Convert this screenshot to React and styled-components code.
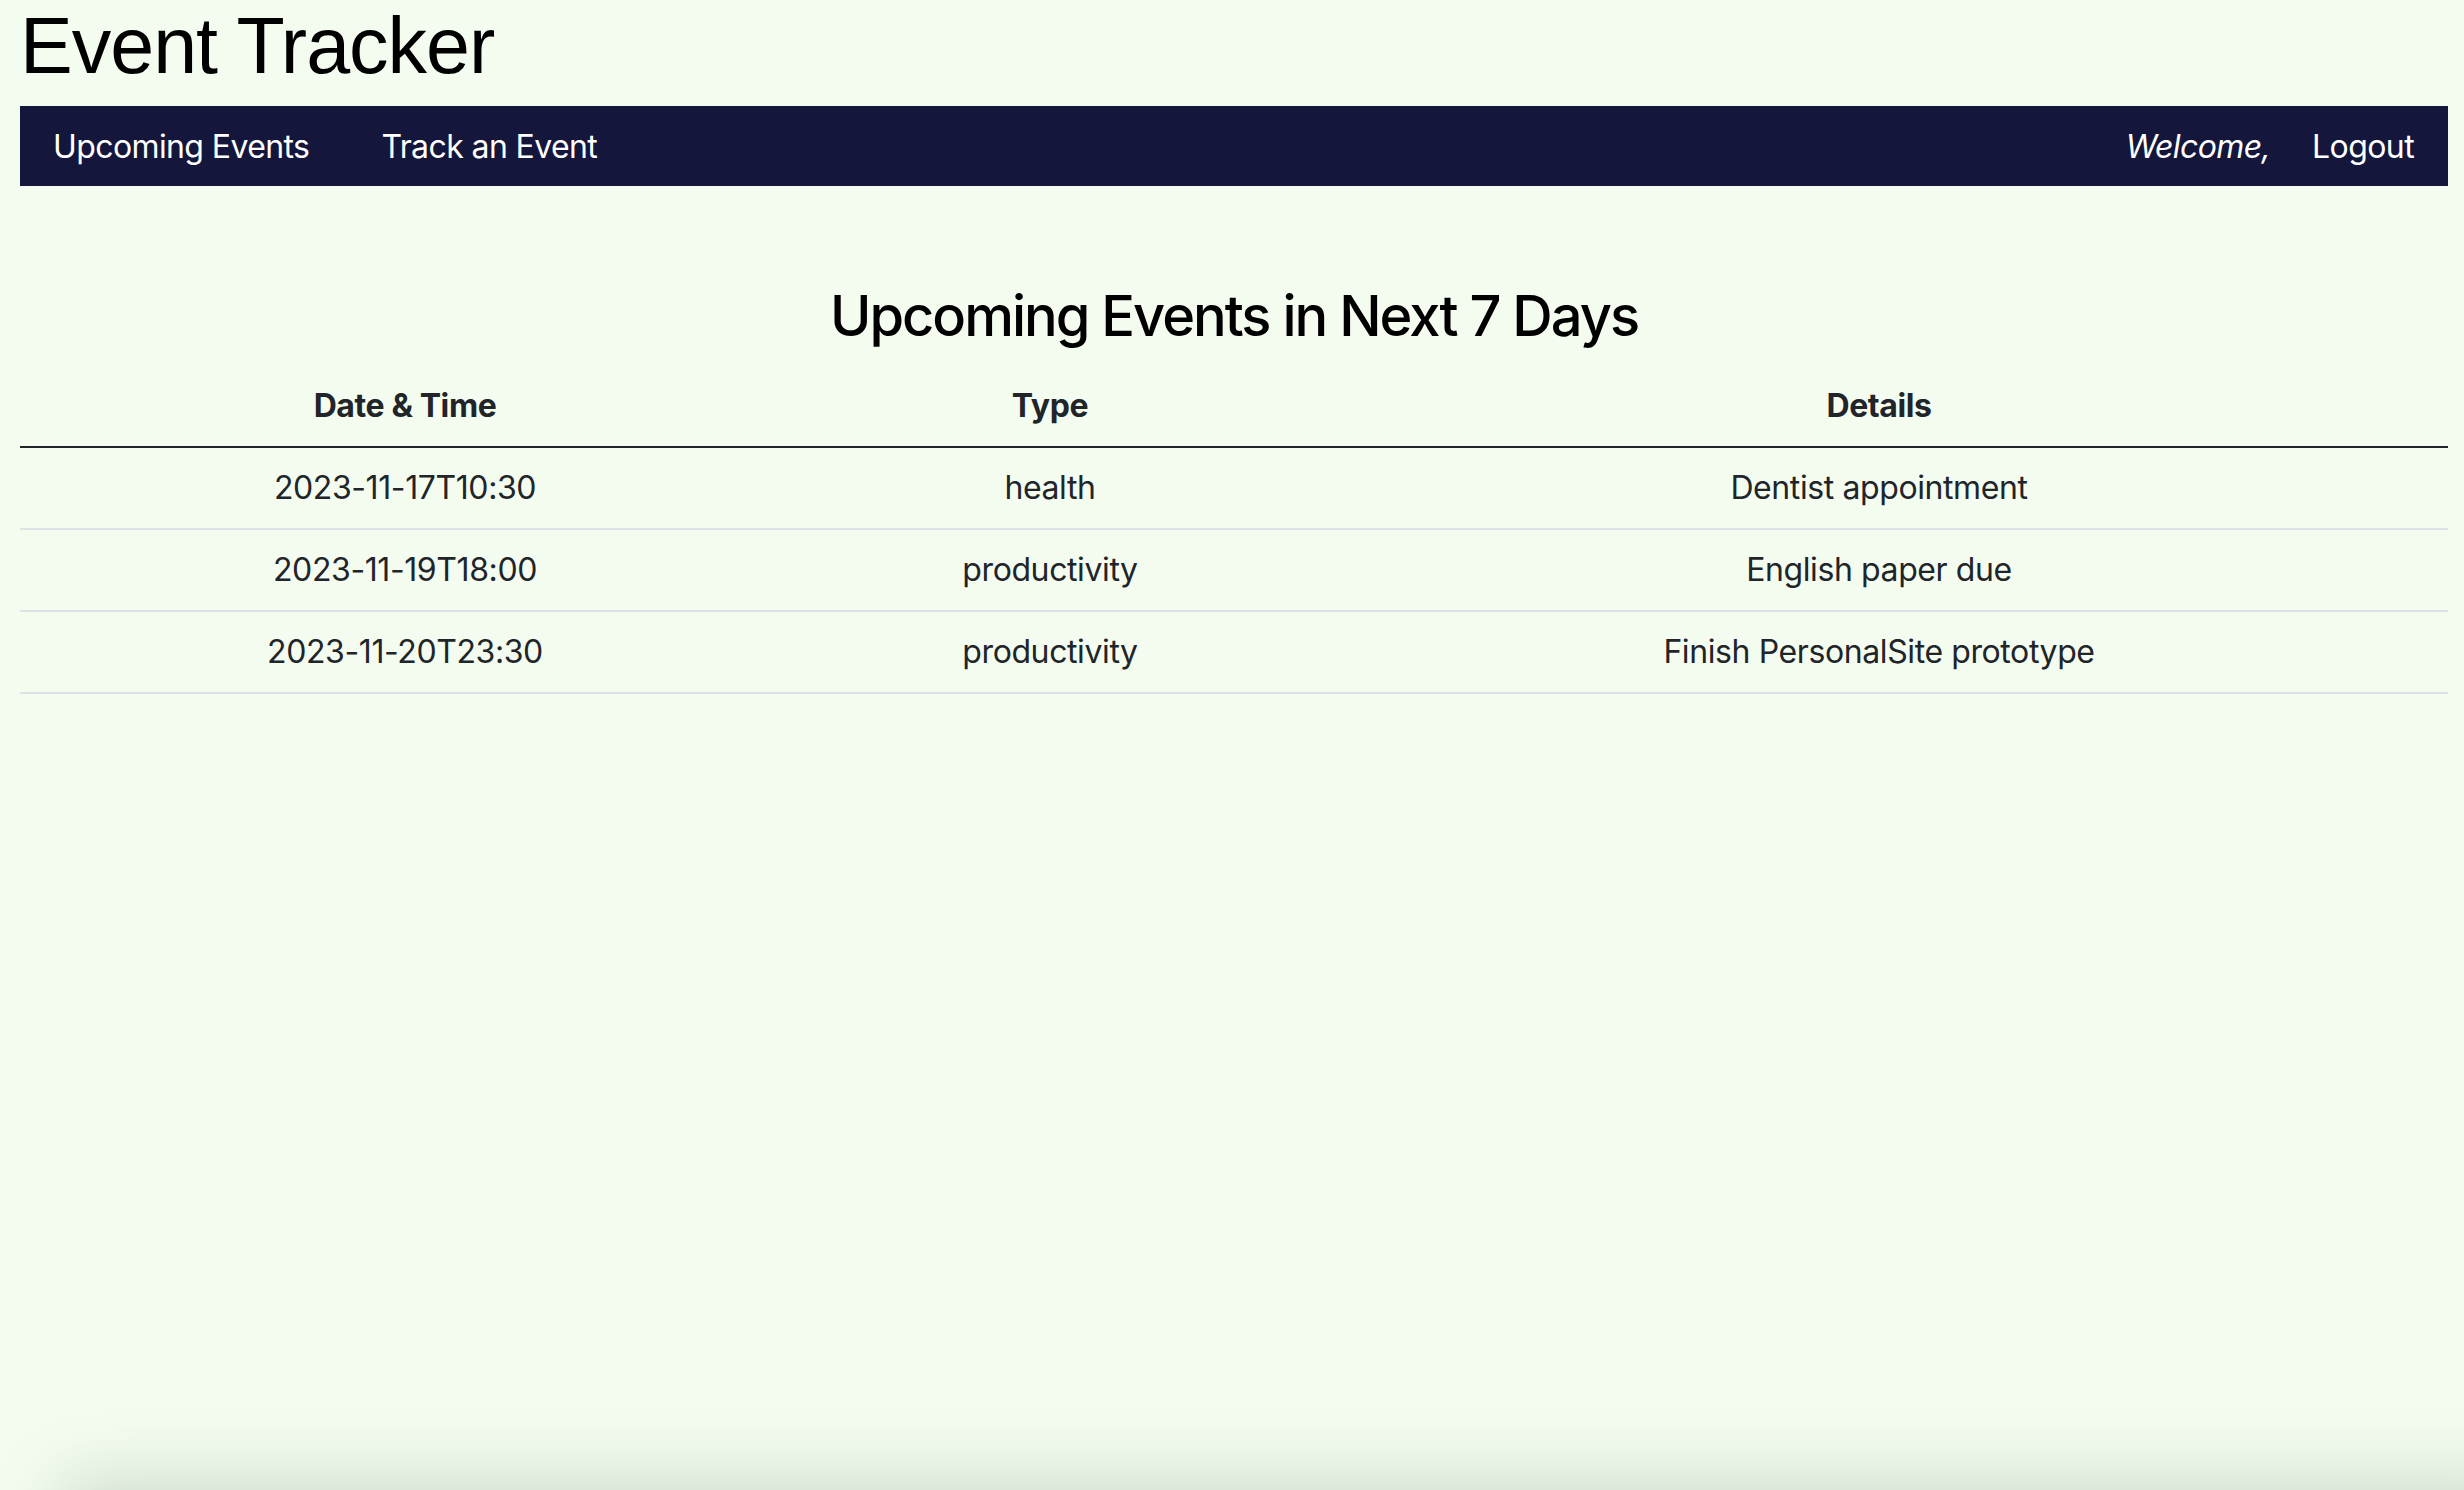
import React from 'react';
import styled, { createGlobalStyle } from 'styled-components';

const GlobalStyle = createGlobalStyle`
  html, body {
    margin: 0;
    padding: 0;
  }
  body {
    background: #f4fcf0;
    color: #212529;
    font-family: Inter, "Noto Sans", sans-serif;
    min-height: 1490px;
  }
`;

const events = [
  { date: '2023-11-17T10:30', type: 'health', details: 'Dentist appointment' },
  { date: '2023-11-19T18:00', type: 'productivity', details: 'English paper due' },
  { date: '2023-11-20T23:30', type: 'productivity', details: 'Finish PersonalSite prototype' },
];

const App = () => {
  return (
    <>
      <GlobalStyle />
      <Page>
        <Title>Event Tracker</Title>
        <NavBar>
          <NavLink>Upcoming Events</NavLink>
          <NavLink>Track an Event</NavLink>
          <Spacer />
          <Welcome>Welcome,</Welcome>
          <NavLink last>Logout</NavLink>
        </NavBar>
        <Main>
          <Heading>Upcoming Events in Next 7 Days</Heading>
          <Table>
            <thead>
              <tr>
                <Th width={738}>Date &amp; Time</Th>
                <Th width={488}>Type</Th>
                <Th>Details</Th>
              </tr>
            </thead>
            <tbody>
              {events.map((ev) => (
                <tr key={ev.date}>
                  <Td>{ev.date}</Td>
                  <Td>{ev.type}</Td>
                  <Td>{ev.details}</Td>
                </tr>
              ))}
            </tbody>
          </Table>
        </Main>
      </Page>
      <FooterShade />
    </>
  );
};

export default App;

const Page = styled.div`
  padding: 0 16px 0 20px;
`;

const Title = styled.h1`
  margin: 0;
  height: 106px;
  font-family: "Liberation Sans", Arial, sans-serif;
  font-weight: 400;
  font-size: 79px;
  line-height: 92px;
  color: #000;
  letter-spacing: -1px;
`;

const NavBar = styled.nav`
  display: flex;
  align-items: center;
  height: 80px;
  padding: 0 34px 0 33px;
  background: #14163c;
`;

const NavLink = styled.a`
  color: #fff;
  font-size: 32px;
  letter-spacing: -0.6px;
  margin-right: ${(p) => (p.last ? '0' : '72px')};
  cursor: pointer;
`;

const Spacer = styled.div`
  flex: 1;
`;

const Welcome = styled.span`
  color: #fff;
  font-size: 32px;
  font-style: italic;
  letter-spacing: -0.6px;
  margin-right: 42px;
`;

const Main = styled.main`
  padding-top: 97px;
`;

const Heading = styled.h3`
  margin: 0 0 16px;
  text-align: center;
  font-size: 56px;
  font-weight: 500;
  line-height: 1.2;
  letter-spacing: -2px;
  color: #000;
`;

const Table = styled.table`
  width: 100%;
  border-collapse: collapse;
  font-size: 32px;
  line-height: 48px;
  letter-spacing: -0.4px;
`;

const Th = styled.th`
  width: ${(p) => (p.width ? `${p.width}px` : 'auto')};
  padding: 16px;
  font-weight: 700;
  text-align: center;
  border-bottom: 2px solid #212529;
`;

const Td = styled.td`
  padding: 16px;
  text-align: center;
  border-bottom: 2px solid #dee2e6;
`;

const FooterShade = styled.div`
  position: fixed;
  top: 1490px;
  left: 70px;
  right: -60px;
  height: 120px;
  box-shadow: 0 0 70px 10px rgba(70, 110, 60, 0.22);
  pointer-events: none;
`;
